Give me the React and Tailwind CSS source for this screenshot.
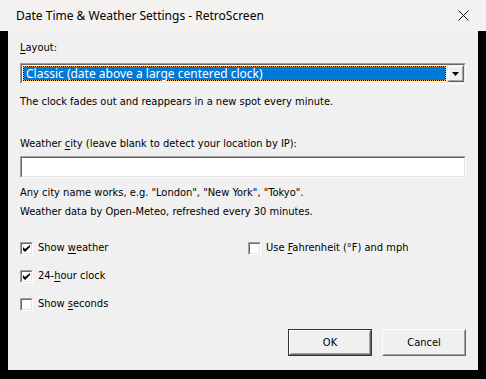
import React from "react";

const sunken =
  "border-t-[#a0a0a0] border-l-[#a0a0a0] border-b-white border-r-white border";
const sunkenInner =
  "border-t-[#696969] border-l-[#696969] border-b-[#e3e3e3] border-r-[#e3e3e3] border";

function Mn({ children }) {
  return <span className="underline underline-offset-2">{children}</span>;
}

function CheckBox({ checked, children }) {
  return (
    <label className="flex items-center h-[20px] gap-[5px]">
      <span className={`w-[13px] h-[13px] ${sunken} flex`}>
        <span className={`flex-1 ${sunkenInner} bg-white flex items-center justify-center`}>
          {checked && (
            <svg width="7" height="7" viewBox="0 0 7 7">
              <path d="M0 2 L0 5 L2 7 L7 2 L7 0 L2 4 Z" fill="#000" />
            </svg>
          )}
        </span>
      </span>
      <span>{children}</span>
    </label>
  );
}

function Btn({ def, children }) {
  return (
    <button
      className={`w-[84px] h-[27px] flex ${def ? "border border-[#333]" : ""}`}
    >
      <span className="flex-1 flex border border-t-white border-l-white border-b-[#696969] border-r-[#696969]">
        <span className="flex-1 flex items-center justify-center border border-t-[#f0f0f0] border-l-[#f0f0f0] border-b-[#a0a0a0] border-r-[#a0a0a0] bg-[#f0f0f0]">
          {children}
        </span>
      </span>
    </button>
  );
}

export default function App() {
  return (
    <div className="w-[486px] h-[379px] bg-black flex flex-col text-[11px] text-black font-['DejaVu_Sans_Condensed','DejaVu_Sans',sans-serif]">
      <div className="h-[31px] bg-[#f3f2f0] flex items-center pl-[16px] pr-[17px] text-[12px] font-['Noto_Sans',sans-serif]">
        <span className="flex-1">Date Time &amp; Weather Settings - RetroScreen</span>
        <svg width="11" height="11" viewBox="0 0 11 11" stroke="#111" strokeWidth="1">
          <path d="M0.5 0.5 L10.5 10.5 M10.5 0.5 L0.5 10.5" />
        </svg>
      </div>
      <div className="mx-[8px] h-[339px] bg-[#f0f0f0] px-[12px] flex flex-col leading-[14px]">
        <div className="mt-[10px]">
          <Mn>L</Mn>ayout:
        </div>
        <div className={`mt-[8px] h-[21px] flex ${sunken}`}>
          <div className={`flex-1 flex ${sunkenInner} bg-white`}>
            <div className="flex-1 m-[1px] border border-dotted border-black bg-[#f5a640] flex">
              <div className="flex-1 bg-[#0078d7] text-white text-[12px] font-['Noto_Sans',sans-serif] pl-[2px] flex items-center">
                Classic (date above a large centered clock)
              </div>
            </div>
            <div className="w-[17px] flex border border-t-[#f0f0f0] border-l-[#f0f0f0] border-b-[#696969] border-r-[#696969]">
              <div className="flex-1 flex items-center justify-center bg-[#f0f0f0] border border-t-white border-l-white border-b-[#a0a0a0] border-r-[#a0a0a0]">
                <svg width="7" height="4" viewBox="0 0 7 4">
                  <path d="M0 0 H7 L3.5 4 Z" fill="#000" />
                </svg>
              </div>
            </div>
          </div>
        </div>
        <div className="mt-[11px]">
          The clock fades out and reappears in a new spot every minute.
        </div>
        <div className="mt-[28px]">
          Weather <Mn>c</Mn>ity (leave blank to detect your location by IP):
        </div>
        <div className={`mt-[5px] h-[22px] flex ${sunken}`}>
          <div className={`flex-1 ${sunkenInner} bg-white`} />
        </div>
        <div className="mt-[5px] leading-[19px]">
          <div>Any city name works, e.g. "London", "New York", "Tokyo".</div>
          <div>Weather data by Open-Meteo, refreshed every 30 minutes.</div>
        </div>
        <div className="mt-[17px] grid grid-cols-[228px_1fr] gap-y-[8px]">
          <CheckBox checked>
            Show <Mn>w</Mn>eather
          </CheckBox>
          <CheckBox>
            Use <Mn>F</Mn>ahrenheit (°F) and mph
          </CheckBox>
          <CheckBox checked>
            24-<Mn>h</Mn>our clock
          </CheckBox>
          <div />
          <CheckBox>
            Show <Mn>s</Mn>econds
          </CheckBox>
        </div>
        <div className="mt-auto mb-[14px] flex justify-end gap-[10px]">
          <Btn def>OK</Btn>
          <Btn>Cancel</Btn>
        </div>
      </div>
    </div>
  );
}
